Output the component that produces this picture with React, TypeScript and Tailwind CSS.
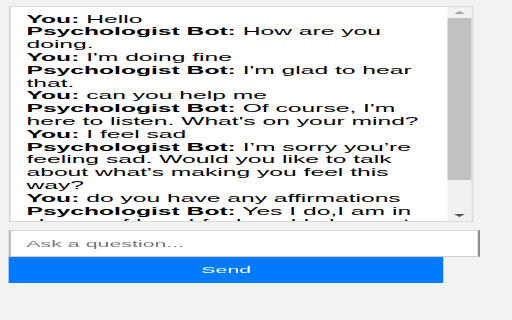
import React from "react";

const messages: { who: string; text: string }[] = [
  { who: "You:", text: "Hello" },
  { who: "Psychologist Bot:", text: "How are you doing." },
  { who: "You:", text: "I'm doing fine" },
  { who: "Psychologist Bot:", text: "I'm glad to hear that." },
  { who: "You:", text: "can you help me" },
  { who: "Psychologist Bot:", text: "Of course, I'm here to listen. What's on your mind?" },
  { who: "You:", text: "I feel sad" },
  {
    who: "Psychologist Bot:",
    text: "I\u2019m sorry you\u2019re feeling sad. Would you like to talk about what's making you feel this way?",
  },
  { who: "You:", text: "do you have any affirmations" },
  {
    who: "Psychologist Bot:",
    text: "Yes I do,I am in charge of how I feel, and I choose to feel happy and calm today.",
  },
];

export default function App() {
  return (
    <div className="w-[512px] h-[320px] overflow-hidden bg-[#f2f2f2]">
      <div className="w-[236.8px] origin-top-left [transform:scaleX(2.162)] pt-[6px] pl-[4px] font-['Liberation_Sans',Arial,sans-serif]">
        <div className="flex w-[215.4px] h-[216px] border border-[#d9d9d9] bg-white">
          <div className="flex-1 overflow-hidden pl-[7.26px] pt-[5.65px]">
            <div className="w-[189.2px] text-[11.4px] leading-[12.8px] text-black">
              {messages.map((m, i) => (
                <div key={i}>
                  <b className="font-bold">{m.who}</b> {m.text}
                </div>
              ))}
            </div>
          </div>
          <div className="w-[11.7px] flex flex-col bg-[#f1f1f1]">
            <div className="h-[11.3px] flex items-center justify-center">
              <svg width="5.09" height="3" viewBox="0 0 10 3" preserveAspectRatio="none">
                <polygon points="0,3 5,0 10,3" fill="#a3a3a3" />
              </svg>
            </div>
            <div className="mx-[0.6px] h-[161.7px] bg-[#c1c1c1]" />
            <div className="flex-1" />
            <div className="h-[11px] flex items-center justify-center">
              <svg width="5.09" height="3" viewBox="0 0 10 3" preserveAspectRatio="none">
                <polygon points="0,0 10,0 5,3" fill="#505050" />
              </svg>
            </div>
          </div>
        </div>
        <input
          type="text"
          placeholder="Ask a question..."
          className="mt-[8px] block w-[217.7px] h-[27.3px] bg-white border-t border-b border-l border-r border-t-[#d4d4d4] border-b-[#cfcfcf] border-l-[#b8b8b8] border-r-[#8a8a8a] pl-[7.2px] text-[9.9px] text-black placeholder:text-[#777777] outline-none font-['Liberation_Sans',Arial,sans-serif]"
        />
        <button className="block w-[201.3px] h-[25.4px] bg-[#007bff] text-white text-[9.9px] leading-none font-['Liberation_Sans',Arial,sans-serif]">
          Send
        </button>
      </div>
    </div>
  );
}
